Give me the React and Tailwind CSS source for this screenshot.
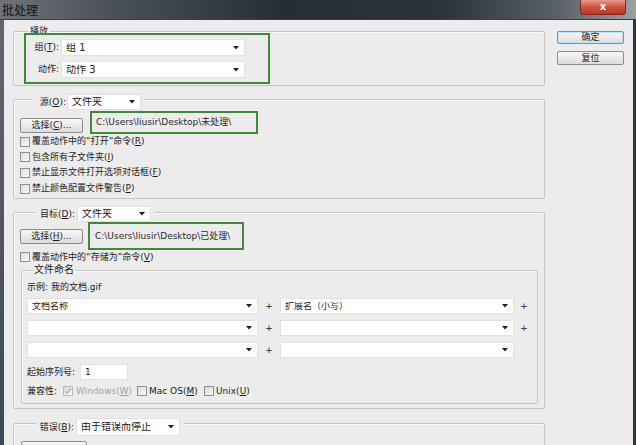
import React from "react";

function Arrow() {
  return (
    <svg width="6" height="4" viewBox="0 0 6 4" className="shrink-0">
      <path d="M0 0h6L3 3.5z" fill="#222" />
    </svg>
  );
}

function Select({ text, className }) {
  return (
    <div className={`flex items-center bg-white border border-[#e2e2e2] pl-[4px] pr-[5px] shrink-0 ${className}`}>
      <span className="flex-1 truncate">{text}</span>
      <Arrow />
    </div>
  );
}

function Btn({ children, className }) {
  return (
    <div className={`flex items-center justify-center border border-[#8c8c8c] rounded-[2px] bg-linear-to-b from-[#f8f8f8] to-[#dcdcdc] shrink-0 ${className}`}>
      {children}
    </div>
  );
}

function CB({ checked, disabled }) {
  return (
    <span
      className={`w-[10px] h-[10px] border flex items-center justify-center shrink-0 bg-linear-to-br from-[#dadada] to-[#fbfbfb] ${
        disabled ? "border-[#b8b8b8]" : "border-[#8e8f8f]"
      }`}
    >
      {checked && (
        <svg width="8" height="8" viewBox="0 0 8 8">
          <path d="M1 4.2l2 2L7 1.5" stroke="#a8a8a8" strokeWidth="1.2" fill="none" />
        </svg>
      )}
    </span>
  );
}

function CheckRow({ children, className }) {
  return (
    <div className={`flex items-center shrink-0 ${className}`}>
      <CB />
      <span className="ml-[2px]">{children}</span>
    </div>
  );
}

const U = ({ children }) => <u className="underline-offset-1">{children}</u>;

export default function App() {
  return (
    <div className="relative w-[636px] h-[445px] overflow-hidden bg-[#ececec] text-[9px] leading-none text-[#1c1c1c] font-['DejaVu_Sans','Noto_Sans_CJK_SC',sans-serif]">
      {/* Title bar */}
      <div className="relative h-[20px] bg-[linear-gradient(90deg,#6e7379_0%,#4a5057_18%,#272d34_45%,#2c333a_70%,#5b6168_88%,#9ca1a6_100%)] border-b border-[#3a3f45]">
        <span className="absolute left-[2px] top-[4px] text-[12px] text-[#111] font-['Noto_Sans_CJK_SC',sans-serif]">批处理</span>
        <div className="absolute right-[10px] top-0 w-[46px] h-[15px] rounded-b-[4px] border border-[#7a2a22] border-t-0 bg-linear-to-b from-[#e79a8c] via-[#cf5240] to-[#b8382a] flex items-center justify-center">
          <span className="text-white text-[10px] font-bold leading-none">x</span>
        </div>
      </div>

      {/* Body */}
      <div className="flex h-[425px]">
        <div className="w-[4px] shrink-0 bg-linear-to-b from-[#62676d] to-[#3c4757]" />
        <div className="flex-1 flex">
          {/* Left column */}
          <div className="ml-[9px] w-[532px] shrink-0 flex flex-col">
            {/* 播放 */}
            <div className="relative shrink-0 mt-[11px] h-[55px] border border-[#c6c6c6] rounded-[2px] shadow-[inset_1px_1px_0_#fafafa]">
              <span className="absolute left-[14px] -top-[8px] px-[2px] bg-[#ececec] leading-[14px]">播放</span>
              <div className="relative ml-[10px] mt-[1px] w-[246px] h-[51px] border-2 border-[#3f8a38] bg-[#ececec] flex flex-col pt-[4px] gap-[5px]">
                <div className="flex items-center h-[17px] shrink-0">
                  <span className="w-[33px] text-right">组(<U>T</U>):</span>
                  <Select className="ml-[2px] w-[184px] h-[17px] text-[10px]" text="组 1" />
                </div>
                <div className="flex items-center h-[17px] shrink-0">
                  <span className="w-[33px] text-right">动作:</span>
                  <Select className="ml-[2px] w-[184px] h-[17px] text-[10px]" text="动作 3" />
                </div>
              </div>
            </div>

            {/* 源 */}
            <div className="relative shrink-0 mt-[13px] h-[100px] border border-[#c6c6c6] rounded-[2px] shadow-[inset_1px_1px_0_#fafafa]">
              <div className="absolute left-[18px] -top-[6px] flex items-center bg-[#ececec] pr-[4px]">
                <span className="w-[34px] text-right">源(<U>O</U>):</span>
                <Select className="ml-[1px] w-[74px] h-[16px] text-[10px]" text="文件夹" />
              </div>
              <div className="mt-[11px] flex items-end">
                <Btn className="ml-[6px] w-[63px] h-[15px] mb-[1px]">
                  选择(<U>C</U>)...
                </Btn>
                <div className="ml-[7px] w-[168px] h-[23px] border-2 border-[#3f8a38] flex items-center pl-[4px] text-[#2a2a2a]">
                  C:\Users\liusir\Desktop\未处理\
                </div>
              </div>
              <div className="ml-[6px] flex flex-col">
                <CheckRow className="h-[15.6px]">覆盖动作中的“打开”命令(<U>R</U>)</CheckRow>
                <CheckRow className="h-[15.6px]">包含所有子文件夹(<U>I</U>)</CheckRow>
                <CheckRow className="h-[15.6px]">禁止显示文件打开选项对话框(<U>F</U>)</CheckRow>
                <CheckRow className="h-[15.6px]">禁止颜色配置文件警告(<U>P</U>)</CheckRow>
              </div>
            </div>

            {/* 目标 */}
            <div className="relative shrink-0 mt-[13px] h-[197px] border border-[#c6c6c6] rounded-[2px] shadow-[inset_1px_1px_0_#fafafa]">
              <div className="absolute left-[22px] -top-[7px] flex items-center bg-[#ececec] pr-[4px]">
                <span className="w-[39px] text-right">目标(<U>D</U>):</span>
                <Select className="ml-[2px] w-[74px] h-[16px] text-[10px]" text="文件夹" />
              </div>
              <div className="mt-[9px] flex items-center">
                <Btn className="ml-[6px] w-[63px] h-[15px]">
                  选择(<U>H</U>)...
                </Btn>
                <div className="ml-[5px] w-[156px] h-[28px] border-2 border-[#3f8a38] flex items-center pl-[5px] text-[#2a2a2a]">
                  C:\Users\liusir\Desktop\已处理\
                </div>
              </div>
              <CheckRow className="ml-[6px] h-[14px]">覆盖动作中的“存储为”命令(<U>V</U>)</CheckRow>

              {/* 文件命名 */}
              <div className="relative ml-[7px] mt-[6px] w-[517px] h-[134px] border border-[#c6c6c6] rounded-[2px] shadow-[inset_1px_1px_0_#fafafa]">
                <span className="absolute left-[10px] -top-[8px] px-[2px] bg-[#ececec] leading-[14px] text-[10px]">文件命名</span>
                <div className="mt-[9px] h-[14px] pl-[5px] flex items-center">示例: 我的文档.gif</div>
                <div className="mt-[4px] pl-[5px] flex items-center h-[16px]">
                  <Select className="w-[231px] h-[16px]" text="文档名称" />
                  <span className="w-[22px] text-center">+</span>
                  <Select className="w-[234px] h-[16px]" text="扩展名（小写）" />
                  <span className="w-[20px] text-center">+</span>
                </div>
                <div className="mt-[6px] pl-[5px] flex items-center h-[16px]">
                  <Select className="w-[231px] h-[16px]" text="" />
                  <span className="w-[22px] text-center">+</span>
                  <Select className="w-[234px] h-[16px]" text="" />
                  <span className="w-[20px] text-center">+</span>
                </div>
                <div className="mt-[6px] pl-[5px] flex items-center h-[16px]">
                  <Select className="w-[231px] h-[16px]" text="" />
                  <span className="w-[22px] text-center">+</span>
                  <Select className="w-[234px] h-[16px]" text="" />
                </div>
                <div className="mt-[6px] pl-[5px] flex items-center h-[16px]">
                  <span className="w-[53px]">起始序列号:</span>
                  <div className="w-[48px] h-[16px] bg-white border border-[#e2e2e2] pl-[4px] flex items-center">1</div>
                </div>
                <div className="mt-[4px] pl-[5px] flex items-center h-[14px]">
                  <span className="w-[36px]">兼容性:</span>
                  <CB checked disabled />
                  <span className="ml-[3px] w-[61px] text-[#a3a3a3]">
                    Windows(<U>W</U>)
                  </span>
                  <CB />
                  <span className="ml-[2px] w-[55px]">
                    Mac OS(<U>M</U>)
                  </span>
                  <CB />
                  <span className="ml-[2px]">
                    Unix(<U>U</U>)
                  </span>
                </div>
              </div>
            </div>

            {/* 错误 */}
            <div className="relative shrink-0 mt-[14px] h-[40px] border border-[#c6c6c6] rounded-[2px] shadow-[inset_1px_1px_0_#fafafa]">
              <div className="absolute left-[22px] -top-[6px] flex items-center bg-[#ececec] pr-[4px]">
                <span className="w-[38px] text-right">错误(<U>B</U>):</span>
                <Select className="ml-[2px] w-[104px] h-[18px] text-[10px]" text="由于错误而停止" />
              </div>
              <Btn className="mt-[17px] ml-[7px] w-[66px] h-[15px]" />
            </div>
          </div>

          {/* Right column */}
          <div className="ml-[12px] w-[67px] flex flex-col">
            <Btn className="mt-[11px] h-[13px] border-[#3c7fb1] shadow-[inset_0_0_0_1px_#bfe3f7]">确定</Btn>
            <Btn className="mt-[7px] h-[14px]">复位</Btn>
          </div>
        </div>
        <div className="w-[3px] shrink-0 bg-[#2e343c]" />
      </div>
    </div>
  );
}
